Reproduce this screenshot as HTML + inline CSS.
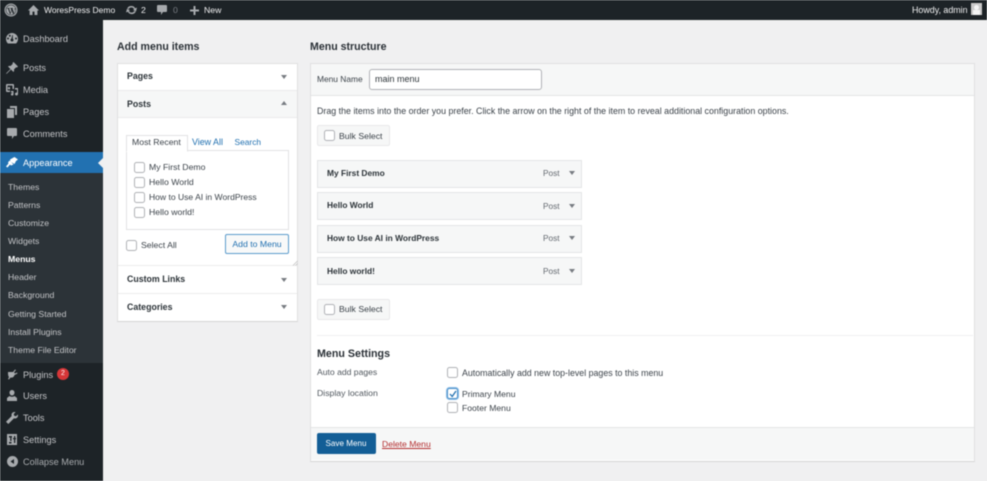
<!DOCTYPE html>
<html><head><meta charset="utf-8"><style>
html,body{margin:0;padding:0}
body{width:987px;height:481px;overflow:hidden;background:#f0f0f1;position:relative;font-family:"Liberation Sans",sans-serif;font-size:8.7px;color:#3c434a}
#w{position:absolute;left:0;top:0;width:987px;height:481px;filter:blur(.5px)}
.a{position:absolute}
.t{position:absolute;white-space:nowrap;line-height:12px}
.s{color:#c3c4c7}
.w{color:#f0f0f1}
.b{font-weight:bold;color:#1d2327}
.c{position:absolute;width:9px;height:9px;border:1px solid #b0b2b6;border-radius:2.500px;background:#fff}
.d{position:absolute;width:0;height:0;border-left:3px solid transparent;border-right:3px solid transparent;border-top:4px solid #787c82}
.u{border-top:0;border-bottom:4px solid #787c82}
.item{position:absolute;left:317px;width:263px;height:26px;background:#f6f7f7;border:1px solid #e4e5e6}
.bs{position:absolute;left:317px;width:71px;height:19px;background:#f6f7f7;border:1px solid #e9e9ea;border-radius:2px}
.m{font-size:8.400px}
.p{font-size:8.300px;color:#646970}
.n{font-size:9.200px;margin-top:.5px}
svg{position:absolute;fill:#a7aaad}
</style></head><body><div id="w">
<div class="a" style="left:0;top:0;width:987px;height:20px;background:#1d2327"></div>
<div class="a" style="left:0;top:20px;width:103px;height:461px;background:#1d2327"></div>
<div class="a" style="left:0;top:152px;width:103px;height:21px;background:#2271b1"></div>
<div class="a" style="left:98px;top:158px;border:5px solid transparent;border-right-color:#f0f0f1;border-left:0"></div>
<div class="a" style="left:0;top:173px;width:103px;height:190px;background:#2c3338"></div>

<svg style="left:4px;top:3px" width="14" height="14" viewBox="0 0 14 14"><circle cx="7" cy="7" r="6.500" fill="#a7aaad"/><circle cx="7" cy="7" r="5.300" fill="#1d2327"/><circle cx="7" cy="7" r="4.800" fill="#a7aaad"/><path d="M3 5h2.600v.5h-.6l1.500 4.300.9-2.400-.6-1.900h-.5V5h2.700v.5h-.6l1.500 4.300.8-2.700c.2-.8-.2-1.300-.6-1.600h1.200v.5L9.700 11h-.6L7.700 7.800 6.500 11h-.6L3.900 5.500H3z" fill="#1d2327"/></svg>
<svg style="left:28px;top:4px" width="11" height="12" viewBox="0 0 11 12"><path d="M5.500 1L0 6.500h1.600V11h2.900V7.600h2V11h2.900V6.500H11z"/></svg>
<div class="t w" style="left:44px;top:4px;font-size:8.500px">WoresPress Demo</div>
<svg style="left:126px;top:5px" width="11" height="10" viewBox="0 0 11 10"><path d="M5.500 1a4 4 0 0 1 3.600 2.200L11 2.600 10 6.400 7 5l1.100-.6A3 3 0 0 0 2.700 4L1.200 3.500A4.400 4.400 0 0 1 5.500 1zM0 7.400 1 3.700l3 1.400-1.100.6a3 3 0 0 0 5.400.3l1.500.5A4.400 4.400 0 0 1 1.900 6.800z"/></svg>
<div class="t w" style="left:141px;top:4px">2</div>
<svg style="left:157px;top:5px" width="10" height="10" viewBox="0 0 10 10"><path d="M1 0h8a1 1 0 0 1 1 1v5a1 1 0 0 1-1 1H6l-2 3V7H1a1 1 0 0 1-1-1V1a1 1 0 0 1 1-1z"/></svg>
<div class="t" style="left:173px;top:4px;color:#787c82">0</div>
<svg style="left:190px;top:6px" width="9" height="9" viewBox="0 0 9 9"><path d="M3.500 0h2v3.500H9v2H5.500V9h-2V5.500H0v-2h3.500z"/></svg>
<div class="t w" style="left:204px;top:4px">New</div>
<div class="t w" style="left:912px;top:4px;font-size:8.900px">Howdy, admin</div>
<div class="a" style="left:971px;top:3px;width:11px;height:12px;background:#c9c9c9"><div class="a" style="left:3px;top:2px;width:5px;height:5px;border-radius:3px;background:#f4f4f4"></div><div class="a" style="left:2px;top:7px;width:7px;height:5px;background:#f4f4f4"></div></div>

<svg style="left:6px;top:33px" width="12" height="11" viewBox="0 0 12 11"><path d="M6 0a6 6 0 0 0-6 6c0 1.800.7 3.400 2 4.500h8c1.300-1.100 2-2.700 2-4.500a6 6 0 0 0-6-6zM2 6.500a1 1 0 1 1 0-2 1 1 0 0 1 0 2zm1.800-2.700a1 1 0 1 1 0-2 1 1 0 0 1 0 2zM6 8.500a1.500 1.500 0 0 1-.6-2.900L6.300 2h.6l-.1 3.700A1.500 1.500 0 0 1 6 8.500zm4-2a1 1 0 1 1 0-2 1 1 0 0 1 0 2z"/></svg>
<div class="t s n" style="left:23px;top:32px">Dashboard</div>
<svg style="left:6px;top:62px" width="12" height="12" viewBox="0 0 12 12"><path d="M7.500 0 12 4.500l-1 1-.8-.3L8 7.400c.3 1.100.1 1.900-.5 2.600L5 7.500 1 11.500l-1 .5.500-1 4-4L2 4.500c.7-.6 1.500-.8 2.600-.5l2.200-2.200-.3-.8z"/></svg>
<div class="t s n" style="left:23px;top:61px">Posts</div>
<svg style="left:6px;top:84px" width="12" height="12" viewBox="0 0 12 12"><path fill-rule="evenodd" d="M1 0h6a1 1 0 0 1 1 1v4H6.500V1.500h-5v5H4V8H1a1 1 0 0 1-1-1V1a1 1 0 0 1 1-1zM3 3a1.200 1.200 0 1 1 0 2.400A1.200 1.200 0 0 1 3 3zM9 4h3v6a1.500 1.500 0 1 1-1-1.400V5.500H9zM5 7h2.500v3.200a1.300 1.300 0 1 1-1-1.200V8.500H5z"/></svg>
<div class="t s n" style="left:23px;top:83px">Media</div>
<svg style="left:7px;top:106px" width="10" height="12" viewBox="0 0 10 12"><path d="M3 0h7v9H8V2H3zM0 3h7v9H0z"/></svg>
<div class="t s n" style="left:23px;top:105px">Pages</div>
<svg style="left:7px;top:128px" width="10" height="11" viewBox="0 0 10 11"><path d="M1 0h8a1 1 0 0 1 1 1v6a1 1 0 0 1-1 1H7l-2 3V8H1a1 1 0 0 1-1-1V1a1 1 0 0 1 1-1z"/></svg>
<div class="t s n" style="left:23px;top:127px">Comments</div>
<svg style="left:6px;top:157px;fill:#fff" width="12" height="11" viewBox="0 0 12 11"><path d="M4 2.500 8.500 0 12 2.500 10 4 8.500 7 4.500 4.800zM3.500 3.500 7.500 7.500 5 8.500 4 7.500 1.500 10.500 0 9.500 2.500 6.500 2 5.500z"/></svg>
<div class="t n" style="left:23px;top:156px;color:#fff">Appearance</div>

<div class="t s" style="left:8px;top:181px;font-size:8.700px">Themes</div>
<div class="t s" style="left:8px;top:199px;font-size:8.700px">Patterns</div>
<div class="t s" style="left:8px;top:217px;font-size:8.700px">Customize</div>
<div class="t s" style="left:8px;top:235px;font-size:8.700px">Widgets</div>
<div class="t" style="left:8px;top:253px;font-size:8.700px;color:#fff;font-weight:bold">Menus</div>
<div class="t s" style="left:8px;top:271px;font-size:8.700px">Header</div>
<div class="t s" style="left:8px;top:289px;font-size:8.700px">Background</div>
<div class="t s" style="left:8px;top:308px;font-size:8.700px">Getting Started</div>
<div class="t s" style="left:8px;top:326px;font-size:8.700px">Install Plugins</div>
<div class="t s" style="left:8px;top:344px;font-size:8.700px">Theme File Editor</div>

<svg style="left:6px;top:369px" width="12" height="11" viewBox="0 0 12 11"><path d="M2 3h5L9 .5l1 .5L8 3.500l1 1 2-1 .5 1-3 1.500C8 8 6.500 9 4.500 8.500L3 10.500l-1-.5 1-2C2 7 2 5 2 3z"/></svg>
<div class="t s n" style="left:23px;top:368px">Plugins</div>
<div class="a" style="left:57px;top:368px;width:12px;height:12px;border-radius:6px;background:#d63638;color:#fff;font-size:7px;line-height:12px;text-align:center">2</div>
<svg style="left:7px;top:390px" width="10" height="11" viewBox="0 0 10 11"><path d="M5 0a2.500 2.500 0 0 1 2.500 2.500c0 1.500-1 3-2.500 3s-2.500-1.500-2.500-3A2.500 2.500 0 0 1 5 0zM0 8l2.500-2c1.500 1 3.500 1 5 0L10 8v3H0z"/></svg>
<div class="t s n" style="left:23px;top:389px">Users</div>
<svg style="left:6px;top:412px" width="12" height="12" viewBox="0 0 12 12"><path d="M8.500 0c-1.800 0-3 1.300-3 3 0 .4 0 .7.200 1L0 9.700 2.300 12 8 6.300c.3.100.6.200.9.200 1.700 0 3.100-1.300 3.100-3 0-.4 0-.7-.2-1L10 4.300 8.200 3.800 7.700 2l1.800-1.800C9.200.1 8.900 0 8.500 0z"/></svg>
<div class="t s n" style="left:23px;top:411px">Tools</div>
<svg style="left:7px;top:434px" width="10" height="11" viewBox="0 0 10 11"><path fill-rule="evenodd" d="M0 0h10v11H0zM2 2v1.500h1.200V7H4.500V3.500H5V2zM7 2v2H6v1.300h1V9h1.300V5.300H9V4H8.300V2zM2 8v1.500h2.500V8z"/></svg>
<div class="t s n" style="left:23px;top:433px">Settings</div>
<svg style="left:7px;top:456px" width="11" height="11" viewBox="0 0 11 11"><path fill-rule="evenodd" d="M5.500 0a5.500 5.500 0 1 1 0 11 5.500 5.500 0 0 1 0-11zM7 3 3.500 5.500 7 8z"/></svg>
<div class="t n" style="left:23px;top:455px;color:#a7aaad">Collapse Menu</div>

<div class="t b" style="left:117px;top:39.500px;font-size:10.600px;line-height:14px;color:#2a3036">Add menu items</div>
<div class="t b" style="left:310px;top:39.500px;font-size:10.600px;line-height:14px;color:#2a3036">Menu structure</div>

<!-- Left panel -->
<div class="a" style="left:117px;top:63px;width:179px;height:257px;background:#fff;border:1px solid #e0e0e1;border-bottom:1px solid #d4d4d5"></div>
<div class="a" style="left:118px;top:90px;width:179px;height:28px;background:#f6f7f7;border-top:1px solid #eaeaeb;border-bottom:1px solid #eaeaeb;box-sizing:border-box"></div>
<div class="a" style="left:118px;top:265px;width:179px;height:1px;background:#ececed"></div>
<div class="a" style="left:118px;top:293px;width:179px;height:1px;background:#ececed"></div>
<div class="t b" style="left:127px;top:70px;color:#2c3338;font-size:8.800px">Pages</div>
<div class="d" style="left:281px;top:75px"></div>
<div class="t b" style="left:127px;top:98px;color:#2c3338;font-size:8.800px">Posts</div>
<div class="d u" style="left:281px;top:101px"></div>
<div class="t b" style="left:127px;top:273px;color:#2c3338;font-size:8.800px">Custom Links</div>
<div class="d" style="left:281px;top:278px"></div>
<div class="t b" style="left:127px;top:300.500px;color:#2c3338;font-size:8.800px">Categories</div>
<div class="d" style="left:281px;top:305px"></div>

<div class="a" style="left:126px;top:150px;width:161px;height:78px;border:1px solid #e2e2e3;background:#fff"></div>
<div class="a" style="left:126px;top:134.500px;width:60px;height:15.500px;border:1px solid #e2e2e3;border-bottom:1px solid #fff;background:#fff"></div>
<div class="t" style="left:132px;top:136px">Most Recent</div>
<div class="t" style="left:192px;top:136px;color:#2271b1;font-size:8.900px">View All</div>
<div class="t" style="left:234.500px;top:136px;color:#2271b1;font-size:8.400px">Search</div>
<div class="c" style="left:134px;top:162px"></div><div class="t" style="left:149px;top:161px">My First Demo</div>
<div class="c" style="left:134px;top:177px"></div><div class="t" style="left:149px;top:176px">Hello World</div>
<div class="c" style="left:134px;top:192px"></div><div class="t" style="left:149px;top:191px;font-size:8.550px">How to Use AI in WordPress</div>
<div class="c" style="left:134px;top:207px"></div><div class="t" style="left:149px;top:206px">Hello world!</div>
<div class="c" style="left:126px;top:240px"></div><div class="t" style="left:141px;top:239px">Select All</div>
<div class="a" style="left:225px;top:234px;width:62px;height:18px;border:1px solid #5c9bcb;border-radius:2px;background:#f8f9f9;color:#2271b1;line-height:18px;text-align:center">Add to Menu</div>
<svg style="left:292px;top:260px;fill:none;stroke:#bbb;stroke-width:.7" width="6" height="6" viewBox="0 0 6 6"><path d="M1 5.500 5.500 1M3.500 5.500l2-2"/></svg>

<!-- Right panel -->
<div class="a" style="left:310px;top:63px;width:662.500px;height:397px;background:#fff;border:1px solid #e0e0e1;border-bottom:1px solid #d4d4d5"></div>
<div class="a" style="left:311px;top:64px;width:662.500px;height:32px;background:#f6f7f7;border-bottom:1px solid #e4e4e5;box-sizing:border-box"></div>
<div class="t" style="left:317px;top:73px;font-size:8.400px">Menu Name</div>
<div class="a" style="left:369px;top:69px;width:171px;height:19px;background:#fff;border:1px solid #b0b2b6;border-radius:3px;line-height:19px;text-indent:5px;color:#2c3338;font-size:9px">main menu</div>
<div class="t" style="left:317px;top:105px;font-size:8.870px">Drag the items into the order you prefer. Click the arrow on the right of the item to reveal additional configuration options.</div>

<div class="bs" style="top:125px"></div><div class="c" style="left:324px;top:130px"></div><div class="t" style="left:339px;top:130px">Bulk Select</div>

<div class="item" style="top:160px"></div><div class="t b m" style="left:327px;top:167px;color:#2c3338">My First Demo</div><div class="t p" style="left:543px;top:167px">Post</div><div class="d" style="left:569px;top:171px"></div>
<div class="item" style="top:192px"></div><div class="t b m" style="left:327px;top:199px;color:#2c3338">Hello World</div><div class="t p" style="left:543px;top:200px">Post</div><div class="d" style="left:569px;top:204px"></div>
<div class="item" style="top:225px"></div><div class="t b m" style="left:327px;top:232px;color:#2c3338">How to Use AI in WordPress</div><div class="t p" style="left:543px;top:232px">Post</div><div class="d" style="left:569px;top:236px"></div>
<div class="item" style="top:257px"></div><div class="t b m" style="left:327px;top:265px;color:#2c3338">Hello world!</div><div class="t p" style="left:543px;top:265px">Post</div><div class="d" style="left:569px;top:269px"></div>

<div class="bs" style="top:299px"></div><div class="c" style="left:324px;top:304px"></div><div class="t" style="left:339px;top:303px">Bulk Select</div>

<div class="a" style="left:317px;top:335px;width:656px;height:1px;background:#f0f0f1"></div>
<div class="t b" style="left:317px;top:346.500px;font-size:10.700px;line-height:14px;color:#2a3036">Menu Settings</div>
<div class="t" style="left:317px;top:366px;color:#50575e;font-size:8.600px">Auto add pages</div>
<div class="c" style="left:447px;top:367px"></div><div class="t" style="left:462px;top:367px;font-size:8.830px">Automatically add new top-level pages to this menu</div>
<div class="t" style="left:317px;top:387px;color:#50575e">Display location</div>
<div class="c" style="left:447px;top:388px;border-color:#4a90c9;box-shadow:0 0 0 1px #8dbde6"></div>
<svg style="left:448px;top:389px;fill:none;stroke:#2271b1;stroke-width:1.300" width="10" height="10" viewBox="0 0 10 10"><path d="M2 5l2.200 2.500L8 2"/></svg>
<div class="t" style="left:462px;top:388px;font-size:8.600px">Primary Menu</div>
<div class="c" style="left:447px;top:402px"></div><div class="t" style="left:462px;top:402px;font-size:8.600px">Footer Menu</div>

<div class="a" style="left:311px;top:427px;width:662.500px;height:33px;background:#f6f7f7;border-top:1px solid #e4e4e5;box-sizing:border-box"></div>
<div class="a" style="left:317px;top:433px;width:59px;height:21px;background:#135e96;border-radius:2px;color:#fff;line-height:21px;text-align:center;font-size:8.100px;text-indent:-1px">Save Menu</div>
<div class="t" style="left:382px;top:438px;color:#b32d2e;text-decoration:underline;font-size:8.600px">Delete Menu</div>
</div></body></html>
